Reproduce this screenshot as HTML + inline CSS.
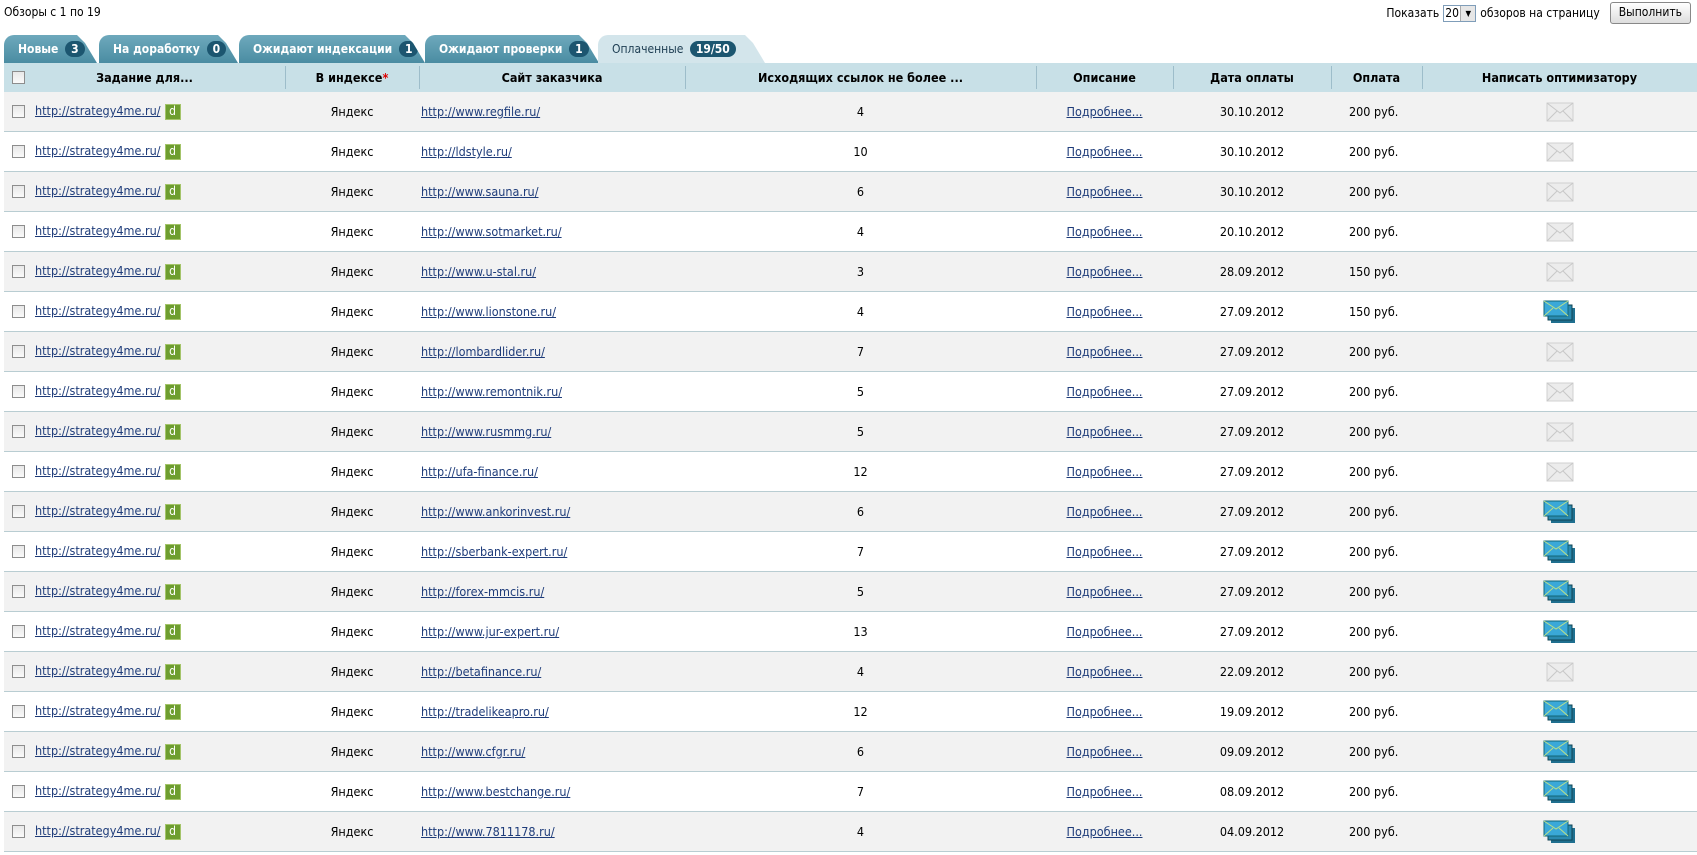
<!DOCTYPE html>
<html><head><meta charset="utf-8"><style>
body{margin:0;width:1697px;height:855px;overflow:hidden;background:#fff;font-family:"DejaVu Sans Condensed","Liberation Sans",sans-serif;font-size:12.5px;color:#000;position:relative}
.top{position:absolute;top:5px;left:4px;font-size:12px}
.ctl{position:absolute;top:2px;right:6px;display:flex;align-items:center;gap:4px;font-size:12px}
.sel{border:1px solid #7f9db9;height:17px;width:33px;display:flex;align-items:center;font-size:12px;padding-left:1px;box-sizing:border-box;position:relative}
.sel i{position:absolute;right:0;top:0;width:14px;height:15px;background:#e6e6e6;border-left:1px solid #aaa;font-style:normal;font-size:8px;text-align:center;line-height:15px}
.btn{border:1px solid #888;border-radius:3px;background:linear-gradient(#fff,#ddd);height:20px;padding:0 8px;line-height:19px;margin-left:6px}
.tab{position:absolute;top:35px;height:28px;border-radius:10px 12px 0 0;clip-path:polygon(0 0,calc(100% - 20px) 0,calc(100% - 12px) 8px,100% 100%,0 100%);background:linear-gradient(#6ea9bc,#4a8ca2);color:#fff;font-weight:bold;font-size:12px;line-height:28px;padding-left:14px;box-sizing:border-box;white-space:nowrap}
.tab b{display:inline-block;background:#1c5670;border-radius:9px;padding:0 6px;line-height:16px;margin-left:3px;color:#fff}
.tab.act{background:#d3e5eb;color:#1d3d52;font-weight:normal}
.tab.act b{font-weight:bold}
table{position:absolute;top:63px;left:4px;width:1693px;border-collapse:collapse}
th{background:#c8e0e7;height:29px;font-weight:bold;font-size:12.5px;position:relative;padding:0}
th+th:before{content:"";position:absolute;left:0;top:3px;bottom:3px;border-left:1px solid #9dbdca}
td{height:39px;border-bottom:1px solid #b9cdd2;padding:0;text-align:center}
tr:nth-child(odd) td{background:#f2f2f2}
tr:nth-child(even) td{background:#fff}
.cb{display:inline-block;width:11px;height:11px;border:1px solid #8d8d8d;background:linear-gradient(#e8e8e8,#fafafa);vertical-align:middle}
a{color:#1e3c7a;text-decoration:underline}
.l{text-align:left}
.d{display:inline-block;width:14px;height:14px;background:#6e9e30;border:1px solid #a4c46a;color:#fff;font-size:12px;line-height:13px;text-align:center;vertical-align:middle;margin-left:4px}
.env{display:inline-block;vertical-align:middle}
</style></head><body>
<div class="top">Обзоры с 1 по 19</div>
<div class="ctl">Показать <span class="sel">20<i>▼</i></span> обзоров на страницу <span class="btn">Выполнить</span></div>
<div class="tab" style="left:4px;width:93px">Новые <b>3</b></div>
<div class="tab" style="left:99px;width:139px">На доработку <b>0</b></div>
<div class="tab" style="left:239px;width:186px">Ожидают индексации <b>1</b></div>
<div class="tab" style="left:425px;width:174px">Ожидают проверки <b>1</b></div>
<div class="tab act" style="left:598px;width:167px">Оплаченные <b>19/50</b></div>
<table>
<colgroup><col style="width:281px"><col style="width:134px"><col style="width:266px"><col style="width:351px"><col style="width:137px"><col style="width:158px"><col style="width:91px"><col></colgroup>
<tr><th><span class="cb" style="position:absolute;left:8px;top:8px"></span>Задание для...</th><th>В индексе<span style="color:#d00">*</span></th><th>Сайт заказчика</th><th>Исходящих ссылок не более ...</th><th>Описание</th><th>Дата оплаты</th><th>Оплата</th><th>Написать оптимизатору</th></tr>
<tbody id="tb"></tbody>
</table>
<script>
var rows=[["www.regfile",4,"30.10.2012",200,0],["ldstyle",10,"30.10.2012",200,0],["www.sauna",6,"30.10.2012",200,0],["www.sotmarket",4,"20.10.2012",200,0],["www.u-stal",3,"28.09.2012",150,0],["www.lionstone",4,"27.09.2012",150,1],["lombardlider",7,"27.09.2012",200,0],["www.remontnik",5,"27.09.2012",200,0],["www.rusmmg",5,"27.09.2012",200,0],["ufa-finance",12,"27.09.2012",200,0],["www.ankorinvest",6,"27.09.2012",200,1],["sberbank-expert",7,"27.09.2012",200,1],["forex-mmcis",5,"27.09.2012",200,1],["www.jur-expert",13,"27.09.2012",200,1],["betafinance",4,"22.09.2012",200,0],["tradelikeapro",12,"19.09.2012",200,1],["www.cfgr",6,"09.09.2012",200,1],["www.bestchange",7,"08.09.2012",200,1],["www.7811178",4,"04.09.2012",200,1]];
var g='<svg class="env" width="28" height="20" viewBox="0 0 28 20"><rect x="1" y="1" width="26" height="18" fill="#ececec" stroke="#d0d0d0"/><path d="M1 1L14 11L27 1M1 19L11 9M27 19L17 9" stroke="#c8c8c8" fill="none"/></svg>';
var b='<svg class="env" width="34" height="24" viewBox="0 0 34 24"><rect x="8" y="8" width="24" height="15" fill="#1f6f8f"/><rect x="5" y="5" width="24" height="15" fill="#2a8ab0" stroke="#145"/><rect x="1" y="1" width="24" height="15" fill="#3aa8d8" stroke="#167"/><path d="M1 1L13 9L25 1M1 16L10 8M25 16L16 8" stroke="#b8e08a" fill="none"/></svg>';
var h="";rows.forEach(function(r){h+='<tr><td class="l"><span class="cb" style="margin:0 10px 0 8px"></span><a href="#">http://strategy4me.ru/</a><span class="d">d</span></td><td>Яндекс</td><td class="l"><a href="#" style="margin-left:2px">http://'+r[0]+'.ru/</a></td><td>'+r[1]+'</td><td><a href="#">Подробнее...</a></td><td>'+r[2]+'</td><td class="l" style="padding-left:18px">'+r[3]+' руб.</td><td>'+(r[4]?b:g)+'</td></tr>'});
document.getElementById("tb").innerHTML=h;
</script>
</body></html>
